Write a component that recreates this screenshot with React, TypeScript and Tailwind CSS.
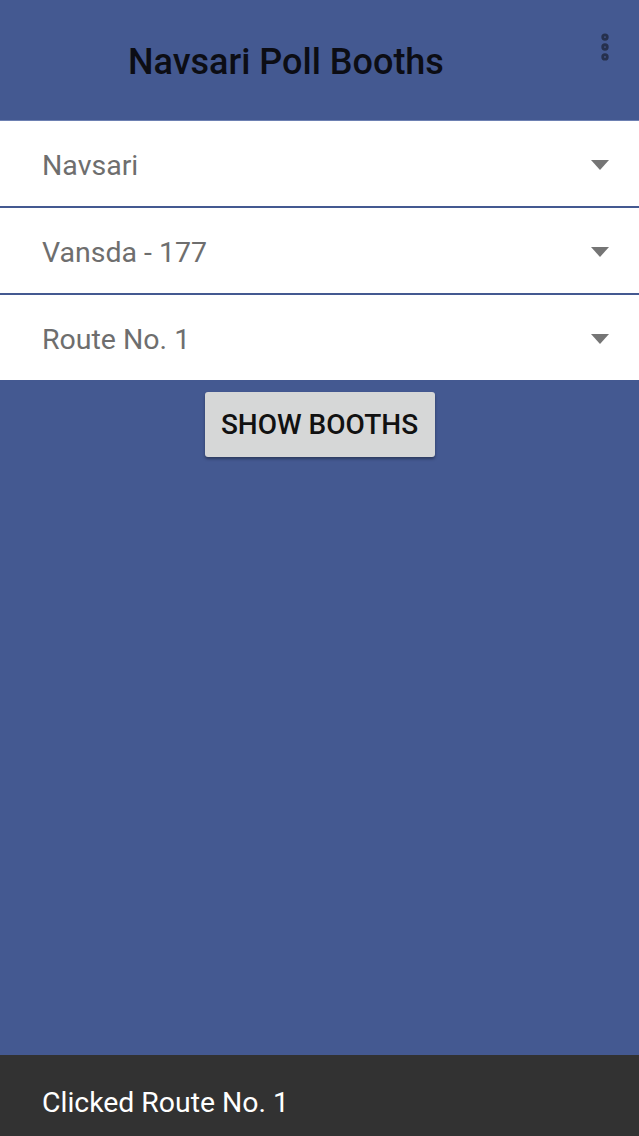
import { EllipsisVertical } from "lucide-react";

const spinners = ["Navsari", "Vansda - 177", "Route No. 1"];

function Spinner({ label }: { label: string }) {
  return (
    <div className="flex h-[85px] items-center justify-between bg-white pl-[42px] pr-[30px]">
      <span className="pt-[6px] text-[28.5px] text-[#6e6e6e]">{label}</span>
      <svg width="18" height="10" viewBox="0 0 18 10" className="mt-[2px]">
        <path d="M0 0h18L9 10z" fill="#757575" />
      </svg>
    </div>
  );
}

export default function App() {
  return (
    <div
      className="flex h-[1136px] w-[639px] flex-col overflow-hidden bg-[#445991]"
      style={{ fontFamily: "Roboto, 'Noto Sans', sans-serif" }}
    >
      {/* Toolbar */}
      <header className="relative flex h-[121px] shrink-0 items-center border-b border-[#6d80b2] pl-[128px] pt-[4px]">
        <h1 className="text-[36px] font-medium text-[#0c0d14]">Navsari Poll Booths</h1>
        <EllipsisVertical className="absolute right-[17px] top-[30px] h-[34px] w-[34px] text-[#26304d]" strokeWidth={3.2} />
      </header>

      {/* Spinners */}
      <div className="flex flex-col gap-[2px]">
        {spinners.map((s) => (
          <Spinner key={s} label={s} />
        ))}
      </div>

      <div className="flex justify-center pt-[12px]">
        <button className="h-[65px] w-[230px] rounded-[3px] bg-[#d6d7d7] text-[28px] font-medium text-[#111] shadow-[0_2px_3px_rgba(0,0,0,0.35)]">
          SHOW BOOTHS
        </button>
      </div>

      <div className="flex-1" />

      {/* Snackbar */}
      <div className="flex h-[81px] shrink-0 items-center bg-[#323232] pl-[42px] pt-[15px]">
        <span className="text-[28.4px] text-white">Clicked Route No. 1</span>
      </div>
    </div>
  );
}
